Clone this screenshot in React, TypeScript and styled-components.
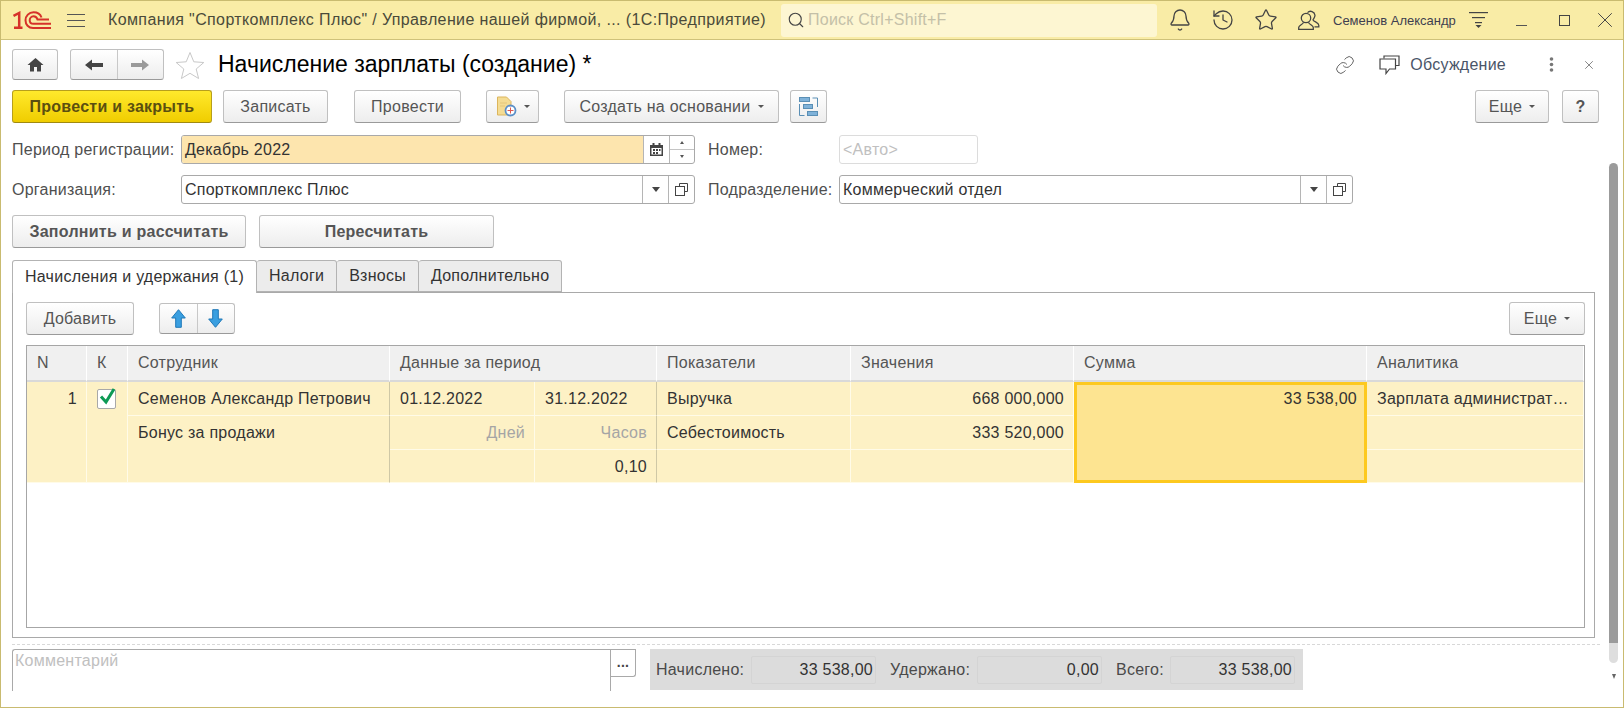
import React from "react";
import styled, { createGlobalStyle } from "styled-components";
import { Bell, History, Star, Link as LinkIcon, X, Search } from "lucide-react";

const Global = createGlobalStyle`
  html, body { margin: 0; padding: 0; background: #fff; }
  body { font-family: "Liberation Sans", Arial, sans-serif; font-size: 16px; letter-spacing: 0.25px; color: #333; }
  * { box-sizing: border-box; }
`;

const Page = styled.div`
  width: 1624px;
  height: 708px;
  display: flex;
  flex-direction: column;
  overflow: hidden;
  border: 1px solid #c9bb70;
  background: #fff;
`;

/* top yellow bar */
const TopBar = styled.header`
  height: 39px;
  flex: none;
  display: flex;
  align-items: center;
  background: #f9eca6;
  border-bottom: 1px solid #cfc27a;
  color: #4d4d3a;
`;
const LogoSlot = styled.div`
  width: 66px;
  padding-left: 12px;
  display: flex;
  align-items: center;
`;
const Burger = styled.div`
  width: 18px;
  height: 13px;
  margin-right: 23px;
  border-top: 1px solid #555;
  border-bottom: 1px solid #555;
  position: relative;
  &::after {
    content: "";
    position: absolute;
    left: 0;
    right: 0;
    top: 5px;
    height: 1px;
    background: #555;
  }
`;
const AppTitle = styled.div`
  width: 673px;
  letter-spacing: 0.38px;
  white-space: nowrap;
  color: #4a4a3a;
`;
const SearchBox = styled.div`
  width: 376px;
  height: 33px;
  border-radius: 3px;
  background: #fdf6d2;
  display: flex;
  align-items: center;
  gap: 3px;
  padding-left: 6px;
  color: #c4c0a8;
`;
const TopIcons = styled.div`
  display: flex;
  align-items: center;
  gap: 19px;
  margin-left: 11px;
  color: #444;
`;
const UserName = styled.div`
  margin-left: 12px;
  width: 136px;
  font-size: 13px;
  letter-spacing: 0;
  white-space: nowrap;
  color: #3f3f50;
`;
const WindowBtns = styled.div`
  display: flex;
  align-items: center;
  margin-left: 27px;
  gap: 32px;
`;
const Minimize = styled.div`
  width: 11px;
  height: 1px;
  margin-top: 10px;
  background: #555;
`;
const Maximize = styled.div`
  width: 11px;
  height: 11px;
  border: 1px solid #444;
  margin-right: -10px;
`;

const Body = styled.div`
  flex: 1;
  min-height: 0;
  display: flex;
`;
const Form = styled.main`
  flex: 1;
  min-width: 0;
  padding: 9px 0 0 11px;
`;

/* vertical scrollbar */
const ScrollTrack = styled.div`
  width: 23px;
  flex: none;
  padding: 123px 5px 0 9px;
  display: flex;
  flex-direction: column;
  align-items: center;
`;
const ScrollThumb = styled.div`
  width: 9px;
  height: 500px;
  flex: none;
  border-radius: 5px;
  background: linear-gradient(#9b9b9b 0, #9b9b9b 480px, #dedede 480px, #dedede 100%);
`;
const ScrollArrow = styled.div`
  margin-top: 11px;
  width: 0;
  height: 0;
  border-left: 2.5px solid transparent;
  border-right: 2.5px solid transparent;
  border-top: 5px solid #666;
`;

/* form title row */
const TitleRow = styled.div`
  height: 31px;
  display: flex;
  align-items: center;
`;
const Title = styled.h1`
  margin: 0 0 0 13px;
  font-size: 23px;
  font-weight: 400;
  letter-spacing: 0;
  color: #000;
  white-space: nowrap;
  flex: 1;
`;
const TitleTools = styled.div`
  display: flex;
  align-items: center;
  margin-right: 4px;
  color: #4a5568;
`;
const Discuss = styled.span`
  margin: 0 43px 0 10px;
  color: #4a5568;
`;

const Btn = styled.button<{ $w?: number; $primary?: boolean; $bold?: boolean; $h?: number }>`
  height: ${(p) => p.$h ?? 33}px;
  width: ${(p) => (p.$w ? `${p.$w}px` : "auto")};
  flex: none;
  padding: 0;
  display: inline-flex;
  align-items: center;
  justify-content: center;
  gap: 7px;
  font-family: inherit;
  font-size: 16px;
  letter-spacing: inherit;
  font-weight: ${(p) => (p.$bold ? 700 : 400)};
  color: ${(p) => (p.$primary ? "#5b4f10" : "#555")};
  border-radius: 3px;
  border: 1px solid ${(p) => (p.$primary ? "#b79f1c" : "#c0c0c0")};
  border-bottom-color: ${(p) => (p.$primary ? "#a08a10" : "#9a9a9a")};
  background: ${(p) =>
    p.$primary ? "linear-gradient(#ffe92c, #f0cd00)" : "linear-gradient(#ffffff, #ededed)"};
`;
const BtnGroup = styled.div<{ $w: number }>`
  display: flex;
  width: ${(p) => p.$w}px;
  height: 31px;
  flex: none;
  border: 1px solid #c0c0c0;
  border-bottom-color: #9a9a9a;
  border-radius: 3px;
  background: linear-gradient(#ffffff, #ededed);
`;
const GroupPart = styled.div`
  flex: 1;
  display: flex;
  align-items: center;
  justify-content: center;
  & + & {
    border-left: 1px solid #c8c8c8;
  }
`;
const Caret = styled.i`
  width: 0;
  height: 0;
  display: inline-block;
  border-left: 3px solid transparent;
  border-right: 3px solid transparent;
  border-top: 3px solid #555;
`;

const Toolbar = styled.div`
  display: flex;
  align-items: center;
  margin-top: 10px;
  padding: 0 1px 1px 0;
`;
const Spacer = styled.div<{ $w?: number }>`
  ${(p) => (p.$w ? `width: ${p.$w}px; flex: none;` : "flex: 1;")}
`;

/* fields */
const FieldRow = styled.div`
  display: flex;
  align-items: center;
  height: 29px;
  margin-top: 11px;
`;
const Label = styled.label<{ $w: number }>`
  width: ${(p) => p.$w}px;
  flex: none;
  color: #4f4f4f;
  white-space: nowrap;
`;
const Field = styled.div<{ $w: number; $disabled?: boolean }>`
  width: ${(p) => p.$w}px;
  height: 29px;
  flex: none;
  display: flex;
  border: 1px solid ${(p) => (p.$disabled ? "#dcdcdc" : "#a9a9a9")};
  border-radius: 3px;
  background: #fff;
  overflow: hidden;
`;
const FieldText = styled.div<{ $fill?: string; $muted?: boolean }>`
  flex: 1;
  min-width: 0;
  padding-left: 3px;
  line-height: 27px;
  color: ${(p) => (p.$muted ? "#c0c0c0" : "#333")};
  background: ${(p) => p.$fill ?? "transparent"};
`;
const FieldBtn = styled.div<{ $w?: number }>`
  width: ${(p) => p.$w ?? 26}px;
  flex: none;
  display: flex;
  align-items: center;
  justify-content: center;
  border-left: 1px solid #b5b5b5;
  color: #444;
`;
const Spin = styled.div`
  width: 25px;
  flex: none;
  display: flex;
  flex-direction: column;
  border-left: 1px solid #b5b5b5;
`;
const SpinPart = styled.div<{ $up?: boolean }>`
  flex: 1;
  display: flex;
  align-items: center;
  justify-content: center;
  ${(p) => p.$up && "border-bottom: 1px solid #c4c4c4;"}
  & > i {
    width: 0;
    height: 0;
    border-left: 2.5px solid transparent;
    border-right: 2.5px solid transparent;
    ${(p) => (p.$up ? "border-bottom: 3px solid #555;" : "border-top: 3px solid #555;")}
  }
`;

const ActionRow = styled.div`
  display: flex;
  gap: 13px;
  margin-top: 11px;
`;

/* tabs */
const Tabs = styled.div`
  display: flex;
  margin-top: 12px;
  height: 32px;
  position: relative;
  z-index: 1;
`;
const Tab = styled.div<{ $active?: boolean }>`
  height: ${(p) => (p.$active ? 33 : 32)}px;
  padding: 0 12px;
  display: flex;
  align-items: center;
  color: #333;
  white-space: nowrap;
  border: 1px solid #b3b3b3;
  border-left-width: ${(p) => (p.$active ? 1 : 0)}px;
  border-radius: 3px 3px 0 0;
  background: ${(p) => (p.$active ? "#fff" : "#ececec")};
  ${(p) => p.$active && "border-bottom: 0;"}
`;
const Panel = styled.section`
  margin-right: 5px;
  height: 346px;
  border: 1px solid #a9a9a9;
  padding: 9px 9px 9px 13px;
`;
const TableBar = styled.div`
  display: flex;
  align-items: center;
  margin-bottom: 10px;
`;

/* table */
const Table = styled.div`
  height: 283px;
  border: 1px solid #a6a6a6;
  display: grid;
  grid-template-columns: 60px 41px 262px 145px 122px 194px 223px 293px 1fr;
  grid-template-rows: 36px 34px 34px 33px;
  align-content: start;
`;
const Head = styled.div<{ $span?: number }>`
  grid-column: span ${(p) => p.$span ?? 1};
  background: #f0f0f0;
  border-right: 1px solid #fff;
  border-bottom: 2px solid #d9d9d9;
  padding-left: 10px;
  line-height: 34px;
  color: #555;
  &:nth-child(9) {
    border-right: 0;
  }
`;
const Cell = styled.div<{
  $right?: boolean;
  $rows?: number;
  $muted?: boolean;
  $line?: boolean;
  $col?: number;
}>`
  grid-row: span ${(p) => p.$rows ?? 1};
  ${(p) => p.$col && `grid-column: ${p.$col};`}
  background: #fdf1c5;
  border-right: 1px solid ${(p) => (p.$line ? "#cfc8a6" : "#fffbe8")};
  border-bottom: 1px solid #fffbe8;
  padding: 0 9px 0 10px;
  line-height: 33px;
  text-align: ${(p) => (p.$right ? "right" : "left")};
  color: ${(p) => (p.$muted ? "#a5a5a5" : "#333")};
  white-space: nowrap;
  overflow: hidden;
`;
const ActiveCell = styled(Cell)`
  background: #fde491;
  border: 3px solid #fdc91f;
  line-height: 27px;
  padding: 0 7px;
`;
const CheckBox = styled.div`
  width: 19px;
  height: 20px;
  margin: 7px 0 0 0;
  background: #fff;
  border: 1px solid #a8a8a8;
  border-radius: 2px;
  position: relative;
`;

/* footer */
const Dashed = styled.div`
  margin-top: 6px;
  border-top: 1px dashed #d8d8d8;
`;
const Footer = styled.div`
  display: flex;
  margin-top: 4px;
`;
const Comment = styled.div`
  width: 624px;
  height: 42px;
  flex: none;
  display: flex;
  border: 1px solid #a9a9a9;
  border-width: 1px 0 0 1px;
  border-radius: 3px 0 0 0;
`;
const CommentText = styled.div`
  flex: 1;
  padding: 2px;
  color: #c0c0c0;
`;
const CommentSide = styled.div`
  width: 26px;
  flex: none;
  border-left: 1px solid #a9a9a9;
`;
const CommentBtn = styled.div`
  height: 27px;
  border-bottom: 1px solid #a9a9a9;
  border-right: 1px solid #a9a9a9;
  border-radius: 0 0 3px 0;
  background: #fff;
  display: flex;
  align-items: center;
  justify-content: center;
  font-size: 14px;
  font-weight: 700;
  line-height: 1;
  padding-bottom: 2px;
  color: #444;
`;
const Totals = styled.div`
  margin-left: 14px;
  width: 653px;
  height: 41px;
  display: flex;
  align-items: center;
  padding-left: 6px;
  background: #dcdcdc;
  color: #4a4a4a;
`;
const TotalLabel = styled.div<{ $w: number }>`
  width: ${(p) => p.$w}px;
  flex: none;
`;
const TotalValue = styled.div`
  width: 125px;
  height: 28px;
  flex: none;
  margin-right: 14px;
  padding-right: 2px;
  text-align: right;
  line-height: 26px;
  border: 1px solid #d4d4d4;
  border-radius: 2px;
  color: #333;
`;

const Logo = () => (
  <svg width="38" height="18" viewBox="0 0 38 18" fill="none" stroke="#d6322a">
    <path d="M.5 5 6.2 2V16.5M1 16.8H9.5" strokeWidth="2.5" />
    <path d="M38 17H20C15.5 17 12.5 13.5 12.5 9.2S16 1.2 20.5 1.2 27.5 3.5 28.5 6.5" strokeWidth="2" />
    <path d="M38 12.8H20.5C18 12.8 16.7 11 16.7 9.2S18.2 5.3 20.5 5.3 24 6.8 24.5 8.6H36" strokeWidth="2" />
  </svg>
);
const HomeIcon = () => (
  <svg width="17" height="15" viewBox="0 0 17 15" fill="#444">
    <path d="M8.5 1 16.5 8H14V14.5H10V10H7V14.5H3V8H.5Z" />
  </svg>
);
const ArrowSide = ({ dir, color }: { dir: "l" | "r"; color: string }) => (
  <svg width="18" height="12" viewBox="0 0 18 12" fill={color}>
    <path d={dir === "l" ? "M0 6 7 .5V4H18V8H7V11.5Z" : "M18 6 11 .5V4H0V8H11V11.5Z"} />
  </svg>
);
const ArrowBlue = ({ down }: { down?: boolean }) => (
  <svg width="15" height="19" viewBox="0 0 15 19" style={down ? { transform: "scaleY(-1)" } : undefined}>
    <path d="M7.5 .7 14.3 9H10.3V18.3H4.7V9H.7Z" fill="#3a9fe0" stroke="#1f78b8" />
  </svg>
);
const FormStar = () => (
  <svg width="30" height="28" viewBox="0 0 30 28" fill="none" stroke="#c8c8c8">
    <path d="M15 1.5 18.8 10.8 28.8 11.5 21.2 18 23.6 27.5 15 22.3 6.4 27.5 8.8 18 1.2 11.5 11.2 10.8Z" />
  </svg>
);
const PeopleIcon = () => (
  <svg width="24" height="24" viewBox="0 0 24 24" fill="none" stroke="currentColor" strokeWidth="1.3">
    <circle cx="9" cy="10" r="4.7" />
    <path d="M6.5 14.3C6 16.5 1.7 17.3 1.7 19.6V21.3H16.3V19.6C16.3 17.3 12 16.5 11.5 14.3" />
    <path d="M10.5 4.6A4.4 4.4 0 0 1 18 7.2C18 9.3 16.6 10.6 16 11.8 16.5 13.8 21.8 14.4 21.8 17.2V18.8H17.5" />
  </svg>
);
const ChatIcon = () => (
  <svg width="21" height="20" viewBox="0 0 21 20" fill="none" stroke="#444" strokeWidth="1.2">
    <path d="M5 3.5V1H20V10.5H17" />
    <path d="M1 4H16.5V14H10.5L7 18.5V14H1Z" />
  </svg>
);
const Dots = () => (
  <svg width="5" height="15" viewBox="0 0 5 15" fill="#777">
    <circle cx="2.5" cy="2" r="1.8" />
    <circle cx="2.5" cy="7.5" r="1.8" />
    <circle cx="2.5" cy="13" r="1.8" />
  </svg>
);
const FilterIcon = () => (
  <svg width="20" height="18" viewBox="0 0 20 18" fill="#444">
    <rect x="0" y="1" width="19" height="1.2" />
    <rect x="3" y="6" width="13" height="1.2" />
    <rect x="6" y="11" width="7" height="1.2" />
    <path d="M6.5 14H12.5L9.5 17Z" />
  </svg>
);
const ReportIcon = () => (
  <svg width="21" height="21" viewBox="0 0 21 21">
    <path d="M1.5 1H10.5L15 5.5V19H1.5Z" fill="#f4dc93" stroke="#dcb55c" />
    <path d="M4 7H11M4 10H9" stroke="#e3c67a" />
    <circle cx="14.5" cy="14.5" r="5" fill="#fff" stroke="#5b8fc7" strokeWidth="1.8" />
    <path d="M14.5 11.5V17.5M11.5 14.5H17.5" stroke="#e0574f" />
  </svg>
);
const StructureIcon = () => (
  <svg width="20" height="20" viewBox="0 0 20 20" fill="#7fb2d9" stroke="#5a8fb5">
    <rect x=".5" y=".5" width="10" height="4" />
    <rect x="4.5" y="7.5" width="9" height="4" />
    <rect x="8.5" y="14.5" width="10" height="4" />
    <path d="M13.5 1H18.5V10M.5 7V18.5H5.5" fill="none" />
  </svg>
);
const CalendarIcon = () => (
  <svg width="13" height="13" viewBox="0 0 13 13" fill="#444">
    <path d="M0 2H13V13H0ZM1.5 5V11.5H11.5V5Z" fillRule="evenodd" />
    <rect x="2.5" y="0" width="2" height="3" />
    <rect x="8.5" y="0" width="2" height="3" />
    <rect x="3" y="6" width="2" height="2" />
    <rect x="6" y="6" width="2" height="2" />
    <rect x="9" y="6" width="1.5" height="2" />
    <rect x="3" y="9" width="2" height="2" />
    <rect x="6" y="9" width="2" height="2" />
  </svg>
);
const OpenIcon = () => (
  <svg width="13" height="13" viewBox="0 0 13 13" fill="none" stroke="#444">
    <path d="M4.5 3.5V.5H12.5V8.5H9.5" />
    <rect x=".5" y="3.5" width="9" height="9" />
  </svg>
);
const DownTri = () => (
  <svg width="8" height="5" viewBox="0 0 8 5" fill="#444">
    <path d="M0 0H8L4 5Z" />
  </svg>
);
const Check = () => (
  <svg
    width="20"
    height="20"
    viewBox="0 0 20 20"
    style={{ position: "absolute", left: 0, top: -4 }}
    fill="none"
    stroke="#0e9a55"
    strokeWidth="3"
  >
    <path d="M3 10.5 8 16 16 3" />
  </svg>
);

export default function App() {
  return (
    <>
      <Global />
      <Page>
        <TopBar>
          <LogoSlot>
            <Logo />
          </LogoSlot>
          <Burger />
          <AppTitle>Компания "Спорткомплекс Плюс" / Управление нашей фирмой, ... (1С:Предприятие)</AppTitle>
          <SearchBox>
            <Search size={18} strokeWidth={1.5} color="#444" />
            Поиск Ctrl+Shift+F
          </SearchBox>
          <TopIcons>
            <Bell size={24} strokeWidth={1.3} />
            <History size={24} strokeWidth={1.3} />
            <Star size={24} strokeWidth={1.3} />
            <PeopleIcon />
          </TopIcons>
          <UserName>Семенов Александр</UserName>
          <FilterIcon />
          <WindowBtns>
            <Minimize />
            <Maximize />
            <X size={26} strokeWidth={0.9} color="#444" />
          </WindowBtns>
        </TopBar>
        <Body>
          <Form>
            <TitleRow>
              <Btn $w={46} $h={31}>
                <HomeIcon />
              </Btn>
              <Spacer $w={12} />
              <BtnGroup $w={94}>
                <GroupPart>
                  <ArrowSide dir="l" color="#444" />
                </GroupPart>
                <GroupPart>
                  <ArrowSide dir="r" color="#9a9a9a" />
                </GroupPart>
              </BtnGroup>
              <Spacer $w={11} />
              <FormStar />
              <Title>Начисление зарплаты (создание) *</Title>
              <TitleTools>
                <LinkIcon size={20} strokeWidth={1.1} color="#555" />
                <Spacer $w={24} />
                <ChatIcon />
                <Discuss>Обсуждение</Discuss>
                <Dots />
                <Spacer $w={28} />
                <X size={14} strokeWidth={1.2} color="#555" />
              </TitleTools>
            </TitleRow>
            <Toolbar>
              <Btn $primary $bold $w={200}>
                Провести и закрыть
              </Btn>
              <Spacer $w={11} />
              <Btn $w={105}>Записать</Btn>
              <Spacer $w={26} />
              <Btn $w={107}>Провести</Btn>
              <Spacer $w={25} />
              <Btn $w={53}>
                <ReportIcon />
                <Caret />
              </Btn>
              <Spacer $w={25} />
              <Btn $w={215}>
                Создать на основании
                <Caret />
              </Btn>
              <Spacer $w={11} />
              <Btn $w={37}>
                <StructureIcon />
              </Btn>
              <Spacer />
              <Btn $w={74}>
                Еще
                <Caret />
              </Btn>
              <Spacer $w={13} />
              <Btn $w={37}>
                <b>?</b>
              </Btn>
            </Toolbar>
            <FieldRow>
              <Label $w={169}>Период регистрации:</Label>
              <Field $w={514}>
                <FieldText $fill="#fde5ae">Декабрь 2022</FieldText>
                <FieldBtn>
                  <CalendarIcon />
                </FieldBtn>
                <Spin>
                  <SpinPart $up>
                    <i />
                  </SpinPart>
                  <SpinPart>
                    <i />
                  </SpinPart>
                </Spin>
              </Field>
              <Spacer $w={13} />
              <Label $w={131}>Номер:</Label>
              <Field $w={139} $disabled>
                <FieldText $muted>&lt;Авто&gt;</FieldText>
              </Field>
            </FieldRow>
            <FieldRow>
              <Label $w={169}>Организация:</Label>
              <Field $w={514}>
                <FieldText>Спорткомплекс Плюс</FieldText>
                <FieldBtn>
                  <DownTri />
                </FieldBtn>
                <FieldBtn>
                  <OpenIcon />
                </FieldBtn>
              </Field>
              <Spacer $w={13} />
              <Label $w={131}>Подразделение:</Label>
              <Field $w={514}>
                <FieldText>Коммерческий отдел</FieldText>
                <FieldBtn>
                  <DownTri />
                </FieldBtn>
                <FieldBtn>
                  <OpenIcon />
                </FieldBtn>
              </Field>
            </FieldRow>
            <ActionRow>
              <Btn $bold $w={234}>
                Заполнить и рассчитать
              </Btn>
              <Btn $bold $w={235}>
                Пересчитать
              </Btn>
            </ActionRow>
            <Tabs>
              <Tab $active>Начисления и удержания (1)</Tab>
              <Tab>Налоги</Tab>
              <Tab>Взносы</Tab>
              <Tab>Дополнительно</Tab>
            </Tabs>
            <Panel>
              <TableBar>
                <Btn $w={108}>Добавить</Btn>
                <Spacer $w={25} />
                <BtnGroup $w={76}>
                  <GroupPart>
                    <ArrowBlue />
                  </GroupPart>
                  <GroupPart>
                    <ArrowBlue down />
                  </GroupPart>
                </BtnGroup>
                <Spacer />
                <Btn $w={76}>
                  Еще
                  <Caret />
                </Btn>
              </TableBar>
              <Table>
                <Head>N</Head>
                <Head>К</Head>
                <Head>Сотрудник</Head>
                <Head $span={2}>Данные за период</Head>
                <Head>Показатели</Head>
                <Head>Значения</Head>
                <Head>Сумма</Head>
                <Head>Аналитика</Head>

                <Cell $rows={3} $right>
                  1
                </Cell>
                <Cell $rows={3}>
                  <CheckBox>
                    <Check />
                  </CheckBox>
                </Cell>
                <Cell $line>Семенов Александр Петрович</Cell>
                <Cell>01.12.2022</Cell>
                <Cell $line>31.12.2022</Cell>
                <Cell>Выручка</Cell>
                <Cell $right>668 000,000</Cell>
                <ActiveCell $rows={3} $right>
                  33 538,00
                </ActiveCell>
                <Cell>Зарплата администрат…</Cell>

                <Cell $rows={2} $line $col={3}>
                  Бонус за продажи
                </Cell>
                <Cell $right $muted>
                  Дней
                </Cell>
                <Cell $right $muted $line>
                  Часов
                </Cell>
                <Cell>Себестоимость</Cell>
                <Cell $right>333 520,000</Cell>
                <Cell $col={9} />

                <Cell $col={4} />
                <Cell $right $line>
                  0,10
                </Cell>
                <Cell />
                <Cell />
                <Cell $col={9} />
              </Table>
            </Panel>
            <Dashed />
            <Footer>
              <Comment>
                <CommentText>Комментарий</CommentText>
                <CommentSide>
                  <CommentBtn>...</CommentBtn>
                </CommentSide>
              </Comment>
              <Totals>
                <TotalLabel $w={95}>Начислено:</TotalLabel>
                <TotalValue>33 538,00</TotalValue>
                <TotalLabel $w={87}>Удержано:</TotalLabel>
                <TotalValue>0,00</TotalValue>
                <TotalLabel $w={54}>Всего:</TotalLabel>
                <TotalValue>33 538,00</TotalValue>
              </Totals>
            </Footer>
          </Form>
          <ScrollTrack>
            <ScrollThumb />
            <ScrollArrow />
          </ScrollTrack>
        </Body>
      </Page>
    </>
  );
}
